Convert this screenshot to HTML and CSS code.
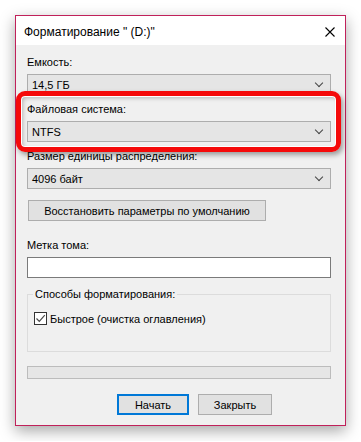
FILE: index.html
```html
<!DOCTYPE html>
<html lang="ru">
<head>
    <meta charset="UTF-8">
    <meta name="viewport" content="width=device-width, initial-scale=1.0">
    <title>Форматирование</title>
    <link rel="stylesheet" href="styles.css">
</head>
<body>
    <div class="window">
        <div class="titlebar">
            <span class="title">Форматирование " (D:)"</span>
            <svg class="close" width="10" height="10" viewBox="0 0 10 10">
                <path d="M0.5 0.5 L9.5 9.5 M9.5 0.5 L0.5 9.5" stroke="#000" stroke-width="1.1" fill="none"/>
            </svg>
        </div>

        <div class="content">
            <div class="label first">Емкость:</div>
            <div class="select"><span>14,5 ГБ</span><span class="chev"></span></div>

            <div class="label">Файловая система:</div>
            <div class="select"><span>NTFS</span><span class="chev"></span></div>

            <div class="label">Размер единицы распределения:</div>
            <div class="select"><span>4096 байт</span><span class="chev"></span></div>

            <button class="btn restore" type="button">Восстановить параметры по умолчанию</button>

            <div class="label volume">Метка тома:</div>
            <div class="textbox"></div>

            <fieldset class="group">
                <legend>Способы форматирования:</legend>
                <label class="check">
                    <span class="box">
                        <svg width="11" height="11" viewBox="0 0 11 11">
                            <path d="M1.5 5.5 L4.3 8.3 L9.8 2.2" stroke="#4a4a4a" stroke-width="1.2" fill="none"/>
                        </svg>
                    </span>
                    Быстрое (очистка оглавления)
                </label>
            </fieldset>

            <div class="progress"></div>

            <div class="actions">
                <button class="btn primary" type="button">Начать</button>
                <button class="btn" type="button">Закрыть</button>
            </div>
        </div>

        <!-- highlight around file system -->
        <div class="highlight"></div>
    </div>
</body>
</html>
```

FILE: styles.css
```css
body {
    margin: 0;
    padding: 15px;
    background-color: #ffffff;
    font-family: "Liberation Sans", Arial, sans-serif;
    font-size: 11px;
    color: #000000;
}

.window {
    position: relative;
    width: 331px;
    box-sizing: border-box;
    border: 1px solid #c0215a;
    background-color: #f0f0f0;
    box-shadow: 0 5px 14px rgba(0, 0, 0, 0.35);
}

.titlebar {
    height: 29px;
    background-color: #ffffff;
    display: flex;
    align-items: center;
    justify-content: space-between;
    padding: 0 10px 0 8px;
}

.title {
    font-size: 12px;
    padding-top: 2px;
}

.close {
    margin-top: 2px;
}

.content {
    display: flex;
    flex-direction: column;
    padding: 0 14px 10px 11px;
}

.label {
    line-height: 15px;
    margin-top: 7px;
    margin-bottom: 4px;
    white-space: nowrap;
}

.label.first {
    margin-top: 10px;
}

.label.volume {
    margin-top: 17px;
}

.select {
    height: 21px;
    box-sizing: border-box;
    border: 1px solid #adadad;
    background-color: #e5e5e5;
    display: flex;
    align-items: center;
    justify-content: space-between;
    padding: 0 8px 0 4px;
}

.chev {
    width: 5px;
    height: 5px;
    border-right: 1px solid #444444;
    border-bottom: 1px solid #444444;
    transform: rotate(45deg);
    margin-top: -4px;
}

.btn {
    font-family: inherit;
    font-size: 11px;
    height: 21px;
    background-color: #e1e1e1;
    border: 1px solid #adadad;
    padding: 0;
    color: #000000;
    white-space: nowrap;
}

.restore {
    margin-top: 11px;
    width: 238px;
    margin-left: 1px;
}

.textbox {
    height: 21px;
    box-sizing: border-box;
    border: 1px solid #7a7a7a;
    background-color: #ffffff;
}

.group {
    margin: 9px 0 0 0;
    padding: 0 6px 0 6px;
    height: 65px;
    box-sizing: border-box;
    border: 1px solid #dcdcdc;
}

.group legend {
    padding: 0 2px;
    margin-left: -1px;
    line-height: 15px;
}

.check {
    display: flex;
    align-items: center;
    gap: 3px;
    margin-top: 10px;
}

.box {
    width: 13px;
    height: 13px;
    box-sizing: border-box;
    border: 1px solid #333333;
    background-color: #ffffff;
    display: flex;
    align-items: center;
    justify-content: center;
}

.progress {
    margin-top: 14px;
    height: 13px;
    box-sizing: border-box;
    border: 1px solid #bcbcbc;
    background-color: #e6e6e6;
}

.actions {
    display: flex;
    gap: 9px;
    margin-top: 15px;
    padding-left: 90px;
}

.actions .btn {
    width: 74px;
}

.actions .primary {
    width: 72px;
    border: 2px solid #0078d7;
}

.highlight {
    position: absolute;
    left: 0;
    top: 75px;
    width: 325px;
    height: 61px;
    box-sizing: border-box;
    border: 5px solid #f50a0a;
    border-radius: 9px;
    box-shadow: 2px 3px 5px rgba(0, 0, 0, 0.35), inset 0 0 0 1px #ffffff, inset 2px 2px 4px rgba(0, 0, 0, 0.25);
}
```
